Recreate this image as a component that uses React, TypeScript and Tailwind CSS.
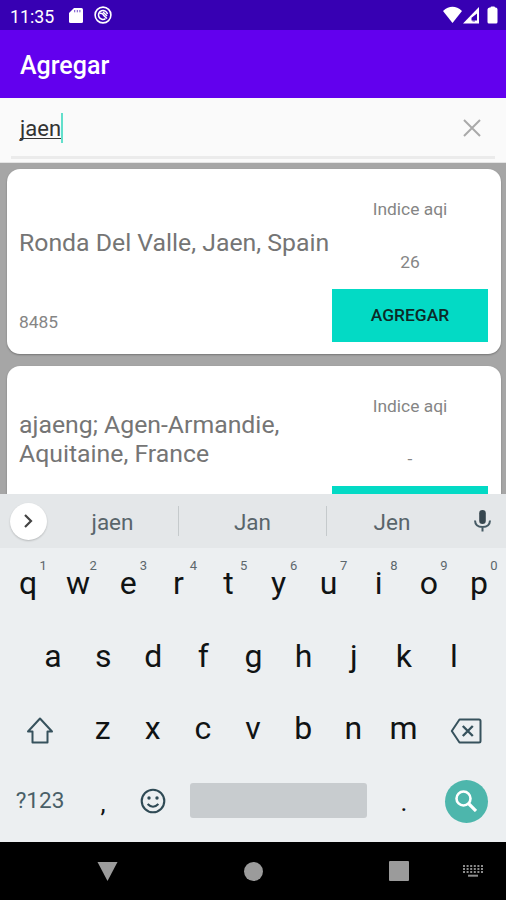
import React from "react";

type Station = { name: string; id: string; aqi: string };

const stations: Station[] = [
  { name: "Ronda Del Valle, Jaen, Spain", id: "8485", aqi: "26" },
  { name: "ajaeng; Agen-Armandie, Aquitaine, France", id: "", aqi: "-" },
];

function StatusBar() {
  return (
    <div className="flex h-[30px] shrink-0 items-center bg-[#3700b3] pl-[10px] pr-[7px] text-white">
      <span className="w-[59px] pt-[3px] text-[17.8px] leading-none">11:35</span>
      <svg className="mt-[1px] h-[15px] w-[14px]" viewBox="0 0 14 15">
        <path d="M5 0H12.5Q14 0 14 1.5V13.5Q14 15 12.5 15H1.5Q0 15 0 13.5V5Z" fill="white" />
        <path d="M5.7 2V4.300M8.300 2V4.300M10.900 2V4.300" stroke="#3700b3" strokeWidth="1" opacity=".7" />
      </svg>
      <svg className="ml-[11px] h-[18px] w-[18px]" viewBox="0 0 18 18" fill="none" stroke="white">
        <circle cx="9" cy="9" r="7.900" strokeWidth="1.600" />
        <path d="M11.500 12.700A4.500 4.500 0 1 1 13.400 8.200" strokeWidth="1.600" />
        <path d="M5.500 7.500Q8.500 6.500 9.800 9.500L13 12.500M9 6L13 10" strokeWidth="1.500" />
      </svg>
      <div className="flex-1" />
      <svg className="h-[18px] w-[56px]" viewBox="0 0 56 18">
        <path d="M0 5Q9.500 -3.300 19 5L9.500 17Z" fill="white" />
        <path d="M36 1V17.500H20Z" fill="white" />
        <path d="M34 7.500V14.500H28.500V11.800Z" fill="#3700b3" />
        <path d="M29.500 12H32V16H29.500Z" fill="#3700b3" opacity=".4" />
        <path d="M46.500 1.500H47.500Q47.500 .5 48.500 .5H51Q52 .5 52 1.500H53Q54.500 2 54.500 3.500V16Q54.500 17.500 53 17.500H46Q44.500 17.500 44.500 16V3.500Q44.500 2 46.500 1.500Z" fill="white" />
      </svg>
    </div>
  );
}

function SearchField() {
  return (
    <div className="flex h-[65px] shrink-0 flex-col border-b border-[#e4e4e4] bg-[#fafafa] px-[11px]">
      <div className="flex h-[58px] items-center">
        <span className="ml-[9px] mt-[4px] text-[22px] leading-[28px] text-[#333] underline decoration-1 underline-offset-[2px] [text-decoration-skip-ink:none]">jaen</span>
        <span className="mt-[2px] h-[30px] w-[2px] bg-[#62dfcb]" />
        <svg className="ml-auto mr-[14px] mt-[2px] h-[18px] w-[18px]" viewBox="0 0 18 18" stroke="#a9a9a9" strokeWidth="2">
          <path d="M1 1L17 17M17 1L1 17" />
        </svg>
      </div>
      <div className="h-[3px] bg-[#ebebeb]" />
    </div>
  );
}

function StationCard({ station }: { station: Station }) {
  return (
    <div className="flex h-[185px] shrink-0 rounded-[13px] bg-white pl-[12.5px] pr-[13px] shadow-[0_1px_2px_rgba(0,0,0,0.3)]">
      <div className="flex w-[313px] shrink-0 flex-col">
        <div className="flex h-[146px] items-center">
          <p className="text-[24.8px] leading-[29px] text-[#757575]">{station.name}</p>
        </div>
        <span className="mt-[-3px] text-[17.4px] leading-[20px] text-[#858585]">{station.id}</span>
      </div>
      <div className="flex flex-1 flex-col items-center text-[17.4px] leading-[20px] text-[#858585]">
        <span className="mt-[30px]">Indice aqi</span>
        <span className="mt-[33px]">{station.aqi}</span>
        <button className="mt-[17px] h-[53px] w-full shrink-0 bg-[#03dac5] pb-[2px] text-[17.4px] font-medium text-[#0b2b28]">AGREGAR</button>
      </div>
    </div>
  );
}

function Suggestions() {
  return (
    <div className="flex h-[54px] items-center bg-[#e4e7e9] text-[22.5px] leading-[28px] text-[#59656b]">
      <div className="ml-[10px] flex h-[37px] w-[37px] items-center justify-center rounded-full bg-white shadow-[0_1px_2px_rgba(0,0,0,0.2)]">
        <svg className="h-[14px] w-[9px]" viewBox="0 0 9 14" fill="none" stroke="#444" strokeWidth="2.200">
          <path d="M1 1L7 7L1 13" />
        </svg>
      </div>
      <span className="w-[131px] pt-[2px] text-center">jaen</span>
      <span className="h-[30px] w-px bg-[#c5cacc]" />
      <span className="w-[147px] pt-[2px] text-center">Jan</span>
      <span className="h-[30px] w-px bg-[#c5cacc]" />
      <span className="w-[130px] pt-[2px] text-center">Jen</span>
      <svg className="ml-[17px] h-[22px] w-[17px]" viewBox="0 0 17 22" fill="none">
        <rect x="5.200" y="0" width="6.600" height="14" rx="3.300" fill="#37474f" />
        <path d="M1 10.500Q1.300 17 8.500 17T16 10.500M8.500 17V21.500" stroke="#455a64" strokeWidth="2" />
      </svg>
    </div>
  );
}

function Key({ label, hint }: { label: string; hint?: string }) {
  return (
    <div className="relative flex flex-1 items-center justify-center pb-[2px] pl-[1px]">
      {label}
      {hint && <span className="absolute left-[37px] top-[10px] text-[13px] leading-[15px] text-[#5c676c]">{hint}</span>}
    </div>
  );
}

function Keyboard() {
  return (
    <div className="h-[348px] shrink-0 bg-[#eceff1] text-[32px] leading-none text-[#101314]">
      <Suggestions />
      <div className="flex h-[72.5px] px-[2.500px]">
        {"qwertyuiop".split("").map((c, i) => <Key key={c} label={c} hint={String((i + 1) % 10)} />)}
      </div>
      <div className="flex h-[72.5px] px-[27.5px]">
        {"asdfghjkl".split("").map((c) => <Key key={c} label={c} />)}
      </div>
      <div className="flex h-[72.5px] items-center px-[3px]">
        <div className="flex w-[74px] justify-center">
          <svg className="mt-[2px] h-[27px] w-[28px]" viewBox="0 0 28 27" fill="none" stroke="#37525d" strokeWidth="2">
            <path d="M14 1.500L26 14.500H21.500V25.500H6.500V14.500H2Z" strokeLinejoin="round" />
          </svg>
        </div>
        <div className="flex w-[351px]">
          {"zxcvbnm".split("").map((c) => <Key key={c} label={c} />)}
        </div>
        <div className="flex w-[75px] justify-center">
          <svg className="mt-[3px] h-[26px] w-[32px]" viewBox="0 0 32 26" fill="none" stroke="#37525d" strokeWidth="2">
            <path d="M9.500 1.500H29Q30.500 1.500 30.500 3V23Q30.500 24.500 29 24.500H9.500L1.800 13Z" strokeLinejoin="round" />
            <path d="M12.800 8L22.800 18M22.800 8L12.800 18" strokeWidth="2.400" />
          </svg>
        </div>
      </div>
      <div className="flex h-[70px] items-center px-[3px]">
        <span className="w-[74px] text-center text-[22.5px] text-[#4a5f68]">?123</span>
        <span className="w-[50px] pl-[2px] pt-[4px] text-center text-[26px]">,</span>
        <div className="flex w-[51px] justify-center">
          <svg className="h-[26px] w-[26px]" viewBox="0 0 26 26" fill="none" stroke="#2f4a55" strokeWidth="2.100">
            <circle cx="13" cy="13" r="11.300" />
            <path d="M7.600 16Q13 21.500 18.400 16" />
            <circle cx="9" cy="10" r="1.700" fill="#2f4a55" stroke="none" />
            <circle cx="17" cy="10" r="1.700" fill="#2f4a55" stroke="none" />
          </svg>
        </div>
        <div className="ml-[12px] h-[35px] w-[177px] rounded-[3px] bg-[#c8cccf]" />
        <span className="ml-[12px] w-[50px] pt-[3px] text-center text-[26px]">.</span>
        <div className="ml-[16px] mt-[2px] flex h-[43px] w-[43px] items-center justify-center rounded-full bg-[#4db6ac]">
          <svg className="mb-[1px] mr-[1px] h-[22px] w-[22px]" viewBox="0 0 22 22" fill="none" stroke="white">
            <circle cx="8.500" cy="8.500" r="7" strokeWidth="2.600" />
            <path d="M13.500 13.500L21 21" strokeWidth="3.200" />
          </svg>
        </div>
      </div>
    </div>
  );
}

function NavigationBar() {
  return (
    <div className="flex h-[58px] shrink-0 items-center bg-black">
      <svg className="ml-[97px] h-[19px] w-[21px]" viewBox="0 0 21 19">
        <path d="M.5 0H20.500L10.500 19Z" fill="#9b9b9b" />
      </svg>
      <div className="ml-[126px] h-[19px] w-[19px] rounded-full bg-[#9b9b9b]" />
      <div className="ml-[126px] h-[20px] w-[20px] rounded-[1px] bg-[#9b9b9b]" />
      <svg className="ml-[54px] h-[12px] w-[20px]" viewBox="0 0 20 12" stroke="#8c8c8c">
        <path d="M0 1H20M0 4H20M0 7H20" strokeWidth="2" strokeDasharray="2 1.600" />
        <path d="M5 10.700H15" strokeWidth="2" />
      </svg>
    </div>
  );
}

export default function App() {
  return (
    <div className="flex h-[900px] w-[506px] flex-col overflow-hidden bg-[#a6a6a6] font-['Roboto',sans-serif]">
      <StatusBar />
      <header className="flex h-[68px] shrink-0 items-center bg-[#6200ee] pl-[20px] pt-[4px] text-[25px] font-medium text-white">Agregar</header>
      <SearchField />
      <main className="flex min-h-0 flex-1 flex-col gap-[12px] overflow-hidden pl-[6.5px] pr-[5px] pt-[6px]">
        {stations.map((s) => <StationCard key={s.name} station={s} />)}
      </main>
      <Keyboard />
      <NavigationBar />
    </div>
  );
}
